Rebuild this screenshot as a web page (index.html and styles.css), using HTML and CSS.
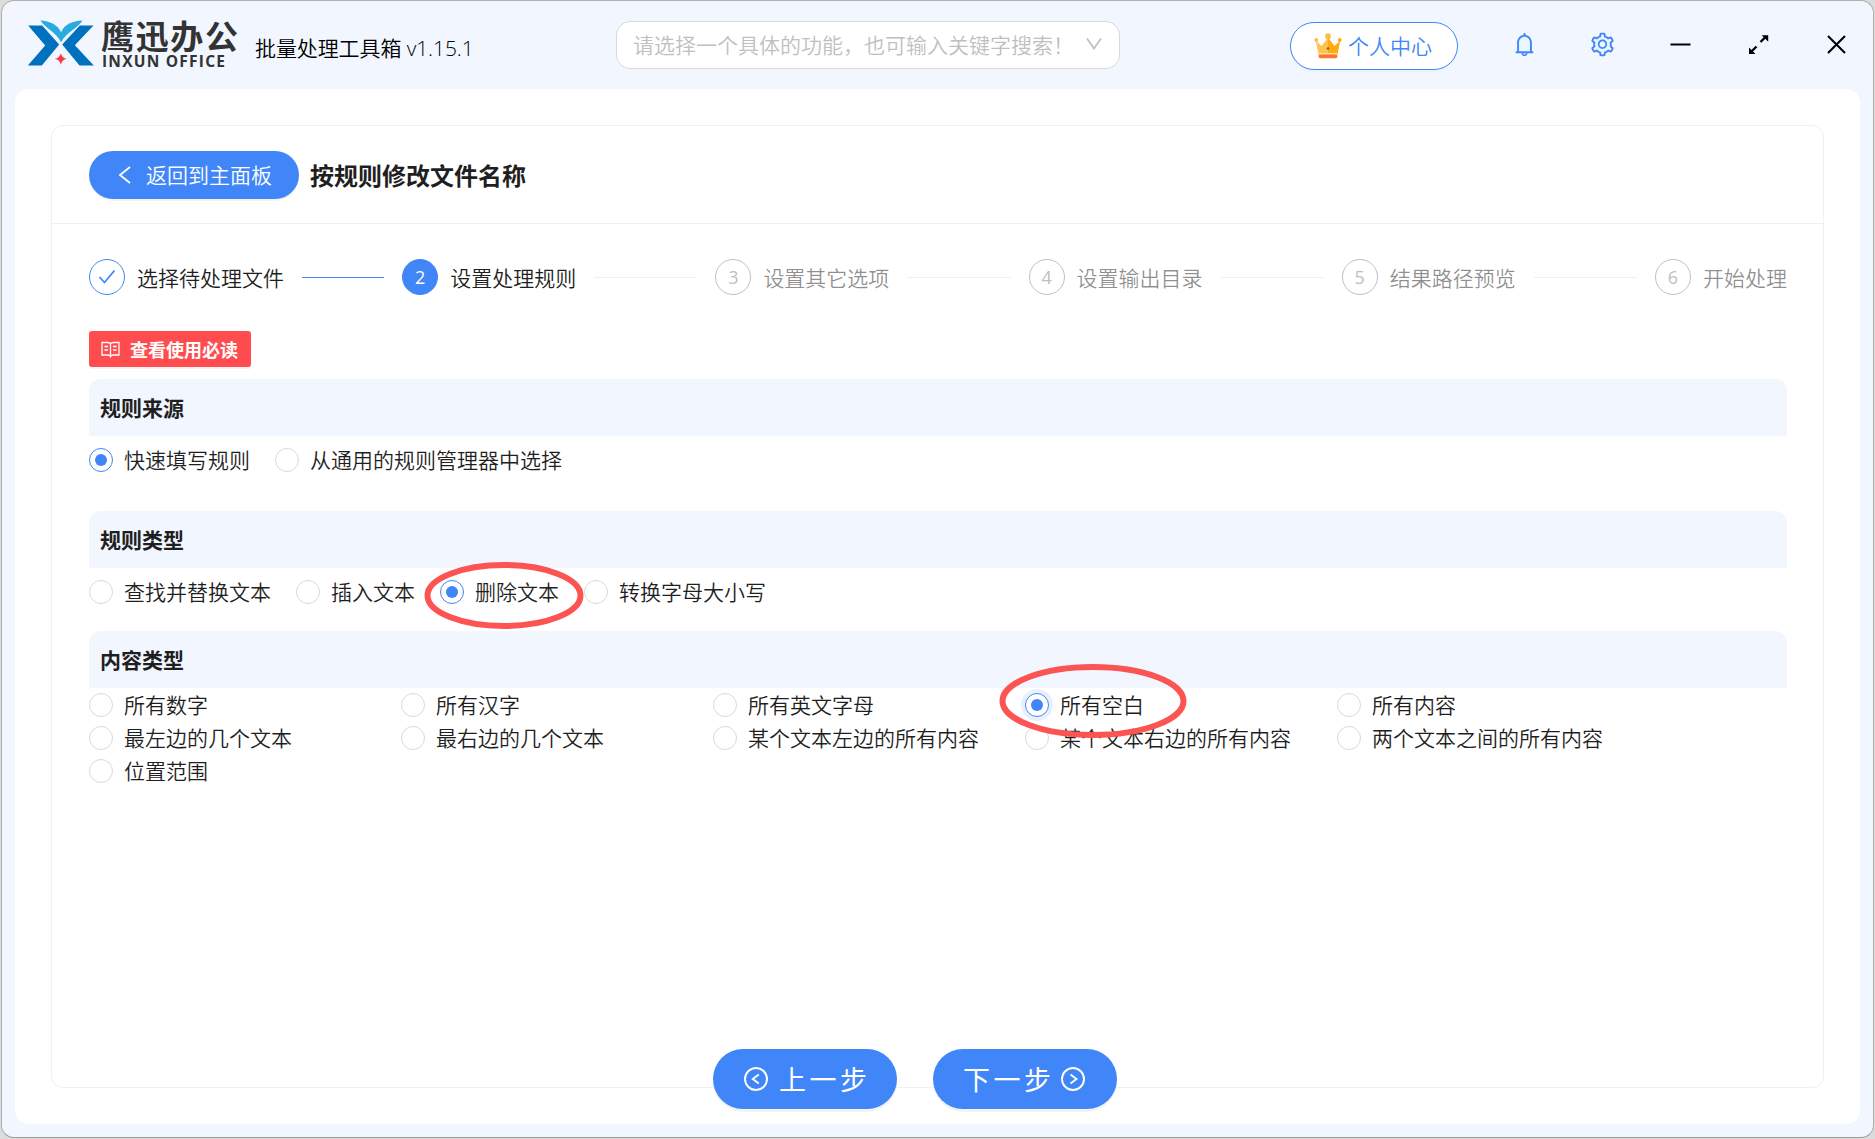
FILE: index.html
```html
<!DOCTYPE html>
<html lang="zh-CN">
<head>
<meta charset="utf-8">
<title>鹰迅办公 批量处理工具箱</title>
<link rel="stylesheet" href="styles.css">
</head>
<body>
<div class="window">
  <header class="topbar">
    <svg class="logo" viewBox="0 0 215 52" width="215" height="52">
      <g transform="translate(-.5 .5) scale(.33333)">
        <path fill="#0071bf" d="M2 18H44L95 75 43 138H1L53 78ZM157 18H198L142 77 199 138H156L104 75Z"/>
        <path fill="#29abe2" d="M39 3C67 5 89 14 101 38 111 14 133 5 165 3 151 27 116 38 101 68 86 38 53 27 39 3Z"/>
        <path fill="#f93a3e" d="M100 101Q103 115 118 118 103 121 100 136 97 121 82 118 97 115 100 101Z"/>
      </g>
      <text class="logo-cn" x="73" y="30" textLength="137">鹰迅办公</text>
      <text class="logo-en" x="74" y="47.5" textLength="123" lengthAdjust="spacing">INXUN OFFICE</text>
    </svg>
    <span class="product">批量处理工具箱 v1.15.1</span>
    <div class="search">
      <span>请选择一个具体的功能，也可输入关键字搜索！</span>
      <svg width="16" height="12" viewBox="0 0 16 12"><path d="M1 .5 8 10.5 15 .5" fill="none" stroke="#bfbfbf" stroke-width="1.7"/></svg>
    </div>
    <button class="account">
      <svg width="28" height="26" viewBox="0 0 28 26">
        <path fill="#ffc44f" d="M2 8 7.500 13 14 4.500V21H4.500Z"/>
        <path fill="#ffad0d" d="M26 8 20.500 13 14 4.500V21H23.500Z"/>
        <g fill="#fcbd4a"><circle cx="2.300" cy="7" r="1.900"/><circle cx="14" cy="3.200" r="2.900"/></g>
        <circle cx="25.700" cy="7" r="1.900" fill="#ffad0d"/>
        <path fill="#ffc44f" d="M2 8Q6 15 10 12T13 4H14V21H4.500Z"/>
        <path fill="#ffad0d" d="M26 8Q22 15 18 12T15 4H14V21H23.500Z"/>
        <path fill="#ffe0a0" d="M4.500 20H23.500V22H4.500Z"/>
        <path fill="#fb7430" d="M4.700 21.500H23.300V24Q23 25.300 21.500 25.300H6.500Q5 25.300 4.700 24Z"/>
        <circle cx="14" cy="15.500" r="1.300" fill="#c4421e"/>
      </svg>
      <span>个人中心</span>
    </button>
    <nav class="tools">
      <svg width="27" height="27" viewBox="0 0 1024 1024"><path fill="#e9f5ff" d="M304 768V428c0-115 93-208 208-208s208 93 208 208v340z"/><path fill="#4086f8" d="M816 768h-24V428c0-141.100-104.300-257.800-240-277.200V112c0-22.100-17.900-40-40-40s-40 17.900-40 40v38.800C336.300 170.200 232 286.900 232 428v340h-24c-17.700 0-32 14.300-32 32v32c0 4.400 3.600 8 8 8h216c0 61.800 50.200 112 112 112s112-50.200 112-112h216c4.400 0 8-3.600 8-8v-32c0-17.700-14.300-32-32-32zM512 888c-26.500 0-48-21.500-48-48h96c0 26.500-21.500 48-48 48zM304 768V428c0-55.600 21.600-107.800 60.900-147.100S456.400 220 512 220c55.600 0 107.800 21.600 147.100 60.900S720 372.400 720 428v340H304z"/></svg>
      <svg width="27" height="27" viewBox="0 0 1024 1024"><circle cx="512" cy="510" r="300" fill="#e9f5ff"/><circle cx="512" cy="502" r="120" fill="#f2f6ff"/><path fill="#4086f8" d="M924.800 625.700l-65.500-56c3.100-19 4.700-38.400 4.700-57.800s-1.600-38.800-4.700-57.800l65.500-56a32.030 32.030 0 009.300-35.200l-.9-2.600a443.740 443.740 0 00-79.700-137.900l-1.800-2.100a32.120 32.120 0 00-35.100-9.500l-81.300 28.900c-30-24.600-63.500-44-99.700-57.600l-15.700-85a32.050 32.050 0 00-25.800-25.700l-2.700-.5c-52.100-9.400-106.900-9.400-159 0l-2.700.5a32.050 32.050 0 00-25.800 25.700l-15.800 85.400a351.860 351.860 0 00-99 57.400l-81.900-29.100a32 32 0 00-35.100 9.500l-1.800 2.100a446.020 446.020 0 00-79.700 137.900l-.9 2.600c-4.500 12.500-.8 26.500 9.300 35.200l66.300 56.600c-3.100 18.800-4.600 38-4.600 57.100 0 19.200 1.500 38.400 4.600 57.100L99 625.500a32.030 32.030 0 00-9.300 35.200l.9 2.600c18.100 50.400 44.900 96.900 79.700 137.900l1.800 2.100a32.120 32.120 0 0035.100 9.500l81.900-29.100c29.800 24.500 63.100 43.900 99 57.400l15.800 85.400a32.050 32.050 0 0025.800 25.700l2.700.5a449.400 449.400 0 00159 0l2.700-.5a32.050 32.050 0 0025.800-25.700l15.700-85a350 350 0 0099.700-57.600l81.300 28.900a32 32 0 0035.100-9.500l1.800-2.100c34.800-41.100 61.600-87.500 79.700-137.900l.9-2.600c4.500-12.300.8-26.300-9.300-35zM788.300 465.900c2.500 15.100 3.800 30.600 3.800 46.100s-1.300 31-3.800 46.100l-6.600 40.100 74.700 63.900a370.030 370.030 0 01-42.600 73.600L721 702.800l-31.400 25.800c-23.900 19.600-50.500 35-79.300 45.800l-38.100 14.300-17.900 97a377.500 377.500 0 01-85 0l-17.900-97.200-37.800-14.500c-28.500-10.800-55-26.200-78.700-45.700l-31.400-25.900-93.400 33.200c-17-22.900-31.200-47.600-42.600-73.600l75.500-64.500-6.500-40c-2.400-14.900-3.700-30.300-3.700-45.500 0-15.300 1.200-30.600 3.700-45.500l6.500-40-75.500-64.500c11.300-26.100 25.600-50.700 42.600-73.600l93.400 33.200 31.400-25.900c23.700-19.500 50.200-34.900 78.700-45.700l37.900-14.300 17.900-97.200c28.100-3.200 56.800-3.200 85 0l17.900 97 38.100 14.300c28.700 10.800 55.400 26.200 79.300 45.800l31.400 25.800 92.800-32.900c17 22.900 31.200 47.600 42.600 73.600L781.800 426l6.500 39.900zM512 326c-97.200 0-176 78.800-176 176s78.800 176 176 176 176-78.800 176-176-78.800-176-176-176zm79.200 255.200A111.600 111.600 0 01512 614c-29.900 0-58-11.700-79.200-32.800A111.600 111.600 0 01400 502c0-29.900 11.700-58 32.800-79.200C454 401.600 482.100 390 512 390c29.900 0 58 11.600 79.200 32.800A111.600 111.600 0 01624 502c0 29.900-11.700 58-32.800 79.200z"/></svg>
      <svg width="27" height="27" viewBox="0 0 27 27"><path d="M3.500 13.500H23.500" stroke="#000" stroke-width="2"/></svg>
      <svg width="27" height="27" viewBox="0 0 27 27"><path d="M15.500 11 20.500 6M11.500 15.500 6.500 20.500" stroke="#000" stroke-width="2.300"/><path d="M16.700 4.300H23.200V10.800ZM10.500 22.900H4V16.400Z"/></svg>
      <svg width="27" height="27" viewBox="0 0 27 27"><path d="M5 5 22 22M22 5 5 22" stroke="#000" stroke-width="2.100"/></svg>
    </nav>
  </header>

  <main class="panel">
    <section class="card">
      <div class="card-head">
        <button class="back">
          <svg width="13" height="18" viewBox="0 0 13 18"><path d="M12 1 2 9 12 17" fill="none" stroke="#fff" stroke-width="1.800"/></svg>
          <span>返回到主面板</span>
        </button>
        <h1>按规则修改文件名称</h1>
      </div>
      <div class="card-body">
        <ol class="steps">
          <li class="done"><i><svg width="18" height="16" viewBox="0 0 18 16"><path d="M1.500 8 6.500 13.500 16.500 1.500" fill="none" stroke="#4086f8" stroke-width="1.800"/></svg></i><span>选择待处理文件</span></li>
          <li class="current"><i>2</i><span>设置处理规则</span></li>
          <li><i>3</i><span>设置其它选项</span></li>
          <li><i>4</i><span>设置输出目录</span></li>
          <li><i>5</i><span>结果路径预览</span></li>
          <li><i>6</i><span>开始处理</span></li>
        </ol>
        <button class="notice">
          <svg width="19" height="17" viewBox="0 0 19 17" fill="none" stroke="#fff" stroke-width="1.300"><path d="M1 1.500H6.500Q9 1.500 9.500 3 10 1.500 12.500 1.500H18V14H12.500Q10 14 9.500 15.500 9 14 6.500 14H1ZM9.500 3V15M3.500 5.500H7M3.500 9H7M12 5.500H15.500M12 9H15.500"/></svg>
          <span>查看使用必读</span>
        </button>
        <h2>规则来源</h2>
        <div class="choices source">
          <label class="checked"><b></b>快速填写规则</label>
          <label><b></b>从通用的规则管理器中选择</label>
        </div>
        <h2>规则类型</h2>
        <div class="choices kind">
          <label><b></b>查找并替换文本</label>
          <label><b></b>插入文本</label>
          <label class="checked"><b></b>删除文本<svg class="mark mark-kind" width="160" height="67" viewBox="0 0 160 67"><ellipse cx="80" cy="33.500" rx="76.500" ry="30.500"/></svg></label>
          <label><b></b>转换字母大小写</label>
        </div>
        <h2>内容类型</h2>
        <div class="content-grid">
          <label><b></b>所有数字</label>
          <label><b></b>所有汉字</label>
          <label><b></b>所有英文字母</label>
          <label class="checked focus"><b></b>所有空白<svg class="mark mark-content" width="188" height="74" viewBox="0 0 188 74"><ellipse cx="94" cy="37" rx="90.500" ry="34"/></svg></label>
          <label><b></b>所有内容</label>
          <label><b></b>最左边的几个文本</label>
          <label><b></b>最右边的几个文本</label>
          <label><b></b>某个文本左边的所有内容</label>
          <label><b></b>某个文本右边的所有内容</label>
          <label><b></b>两个文本之间的所有内容</label>
          <label><b></b>位置范围</label>
        </div>
      </div>
    </section>
    <footer class="pager">
      <button class="prev"><svg width="24" height="24" viewBox="0 0 24 24"><circle cx="12" cy="12" r="11"/><path d="M14.800 7.500 8.800 12 14.800 16.500"/></svg><span>上一步</span></button>
      <button class="next"><span>下一步</span><svg width="24" height="24" viewBox="0 0 24 24"><circle cx="12" cy="12" r="11"/><path d="M9.500 7.500 15.500 12 9.500 16.500"/></svg></button>
    </footer>
  </main>
</div>
</body>
</html>
```
FILE: styles.css
```css
* { box-sizing: border-box; }

body {
  margin: 0;
  height: 1139px;
  overflow: hidden;
  padding: 0 1px 1px;
  background: #dcdcdc;
  color: #1f1f1f;
  font: 350 21px/33px "Noto Sans CJK SC", sans-serif;
}

button {
  margin: 0;
  padding: 0;
  border: 0;
  font: inherit;
  display: flex;
  align-items: center;
}

svg { display: block; flex: none; }

.window {
  height: 1138px;
  border: 1px solid #b0b0b0;
  border-bottom-color: #9c9c9c;
  border-radius: 13px;
  background: #f2f6ff;
  padding: 0 13px 13px;
}

/* Title bar */
.topbar {
  height: 88px;
  display: flex;
  align-items: center;
}

.logo { margin: 0 0 0 13px; overflow: visible; }
.logo-cn { font: 700 33px "Noto Sans CJK SC", sans-serif; fill: #333; }
.logo-en { font: 700 15.5px "Open Sans", sans-serif; fill: #333; }

.product {
  width: 361px;
  margin: 7px 0 0 12px;
  color: #000;
  font-family: "Open Sans", "Noto Sans CJK SC", sans-serif;
  letter-spacing: -.1px;
  white-space: nowrap;
}

.search {
  width: 504px;
  height: 48px;
  display: flex;
  align-items: center;
  justify-content: space-between;
  padding: 0 17px 2px 16px;
  border: 1px solid #d9d9d9;
  border-radius: 14px;
  background: #fff;
  color: #bfbfbf;
  white-space: nowrap;
}

.account {
  width: 168px;
  height: 48px;
  margin: 2px 0 0 170px;
  padding: 0 0 1px 23px;
  gap: 6px;
  border: 1px solid #4086f8;
  border-radius: 24px;
  background: #fff;
  color: #4086f8;
  box-shadow: 0 2px 0 rgba(0, 0, 0, .02);
}

.tools {
  display: flex;
  gap: 51px;
  margin: 0 0 1px 53px;
}

/* Main panel */
.panel {
  height: 1035px;
  padding: 36px;
  border-radius: 14px;
  background: #fff;
}

.card {
  height: 963px;
  border: 1px solid #f0f0f0;
  border-radius: 12px;
}

.card-head {
  height: 98px;
  display: flex;
  align-items: center;
  gap: 11px;
  padding-left: 37px;
  border-bottom: 1px solid #f0f0f0;
}

.back {
  width: 210px;
  height: 48px;
  padding-left: 29px;
  gap: 15px;
  border-radius: 24px;
  background: #4086f8;
  color: #fff;
  box-shadow: 0 2px 0 rgba(0, 0, 0, .045);
}

h1 {
  margin: 0;
  font-size: 24px;
  font-weight: 700;
}

.card-body { padding: 35px 36px 0 37px; }

.steps {
  display: grid;
  grid-template-columns: repeat(5, 313.200px) 1fr;
  margin: 0;
  padding: 0;
  list-style: none;
  color: rgba(0, 0, 0, .45);
}

.steps li {
  height: 36px;
  display: flex;
  align-items: center;
  white-space: nowrap;
}

.steps li:not(:last-child)::after {
  content: "";
  flex: 1;
  height: 1px;
  margin: 0 18px;
  background: #f0f0f0;
}

.steps i {
  width: 36px;
  height: 36px;
  margin-right: 12px;
  flex: none;
  display: grid;
  place-items: center;
  border: 1px solid #bfbfbf;
  border-radius: 50%;
  color: #bfbfbf;
  font: 400 18px "Open Sans", sans-serif;
}

.steps .done { color: #1f1f1f; }
.steps .done i { border-color: #4086f8; }
.steps li.done::after { background: #4086f8; }
.steps .current { color: #1f1f1f; }
.steps .current i { border-color: #4086f8; background: #4086f8; color: #fff; }

.notice {
  width: 162px;
  height: 36px;
  margin: 36px 0 12px;
  padding-left: 12px;
  gap: 10px;
  border-radius: 3px;
  background: #ff4d4f;
  color: #fff;
  font-size: 18px;
  font-weight: 700;
  box-shadow: 0 2px 0 rgba(0, 0, 0, .045);
}

h2 {
  height: 57px;
  margin: 0;
  padding: 12px 11px;
  border-radius: 12px 12px 0 0;
  background: #f2f6ff;
  font-size: 21px;
  font-weight: 700;
}

.choices {
  display: flex;
  gap: 25px;
  height: 33px;
}

.choices.source { margin: 7px 0 35px; }
.choices.kind { margin: 7px 0 23px; }

.content-grid {
  display: grid;
  grid-template-columns: repeat(5, 312px);
}

label {
  position: relative;
  height: 33px;
  display: flex;
  align-items: center;
  gap: 11px;
  white-space: nowrap;
}

label b {
  width: 24px;
  height: 24px;
  display: grid;
  place-items: center;
  border: 1px solid #d9d9d9;
  border-radius: 50%;
  background: #fff;
}

.checked b { border-color: #4086f8; }

.checked b::after {
  content: "";
  width: 12px;
  height: 12px;
  border-radius: 50%;
  background: #4086f8;
}

.focus b { box-shadow: 0 0 0 4px rgba(64, 134, 248, .12); }

/* Hand-drawn highlight rings over the chosen options */
.mark {
  position: absolute;
  z-index: 1;
  fill: none;
  stroke: #fc5353;
  stroke-width: 6px;
}

.mark-kind { left: -16px; top: -13px; }
.mark-content { left: -26px; top: -24px; }

/* Previous / next buttons straddling the card border */
.pager {
  position: relative;
  display: flex;
  gap: 36px;
  margin: -39px 0 0 662px;
}

.pager button {
  width: 184px;
  height: 60px;
  padding-bottom: 1px;
  border-radius: 30px;
  background: #4086f8;
  color: #fff;
  font-size: 27px;
  font-weight: 400;
  letter-spacing: 3.500px;
  box-shadow: 0 3px 0 rgba(0, 0, 0, .045);
}

.pager svg {
  margin-top: 1px;
  fill: none;
  stroke: #fff;
  stroke-width: 1.900px;
}

.pager .prev { padding-left: 31px; gap: 11px; }
.pager .next { padding-left: 30px; gap: 6px; }
```
